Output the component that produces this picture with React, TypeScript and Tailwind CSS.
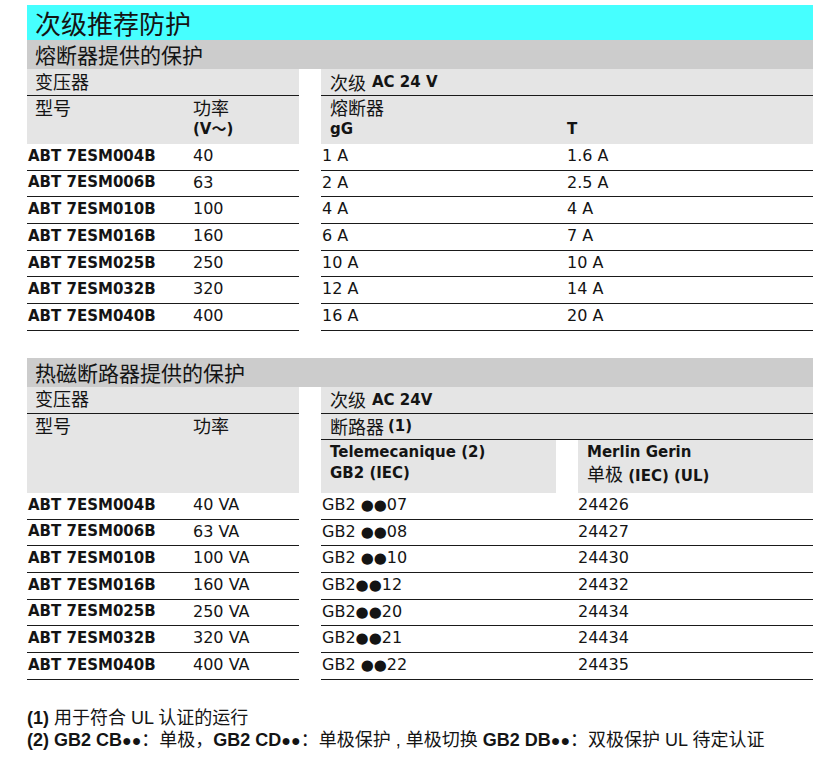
import React from "react";

const base = "font-['DejaVu_Sans','Noto_Sans_CJK_SC',sans-serif] text-[#141414]";
const cjk = "font-['Noto_Sans_CJK_SC',sans-serif]";

const fuseRows = [
    ["ABT 7ESM004B", "40", "1 A", "1.6 A"],
    ["ABT 7ESM006B", "63", "2 A", "2.5 A"],
    ["ABT 7ESM010B", "100", "4 A", "4 A"],
    ["ABT 7ESM016B", "160", "6 A", "7 A"],
    ["ABT 7ESM025B", "250", "10 A", "10 A"],
    ["ABT 7ESM032B", "320", "12 A", "14 A"],
    ["ABT 7ESM040B", "400", "16 A", "20 A"],
];

const breakerRows = [
    ["ABT 7ESM004B", "40 VA", "GB2 ", "07", "24426"],
    ["ABT 7ESM006B", "63 VA", "GB2 ", "08", "24427"],
    ["ABT 7ESM010B", "100 VA", "GB2 ", "10", "24430"],
    ["ABT 7ESM016B", "160 VA", "GB2", "12", "24432"],
    ["ABT 7ESM025B", "250 VA", "GB2", "20", "24434"],
    ["ABT 7ESM032B", "320 VA", "GB2", "21", "24434"],
    ["ABT 7ESM040B", "400 VA", "GB2 ", "22", "24435"],
];

function Row({ children, cols }: { children: React.ReactNode; cols: string }) {
    return (
        <div className={`grid ${cols} h-[26.7px] items-center pb-[2px] border-b border-[#1a1a1a]`}>
            {children}
        </div>
    );
}

export default function App() {
    return (
        <div className={`${base} bg-white w-[840px] h-[759px] pt-[5px]`}>
            <div className="ml-[27px] w-[786px]">
                {/* Title */}
                <div className={`h-[35px] bg-[#46ffff] pl-2 flex items-center text-[26px] ${cjk}`}>
                    次级推荐防护
                </div>
                <div className={`h-[29px] bg-[#cccccc] pl-2 flex items-center text-[21px] ${cjk}`}>
                    熔断器提供的保护
                </div>

                {/* Fuse table */}
                <div className="flex gap-[22px]">
                    <div className="w-[272px]">
                        <div className="bg-[#e5e5e5]">
                            <div className="h-[27px] flex items-center pl-2 text-[18px] border-b border-[#1a1a1a]">
                                变压器
                            </div>
                            <div className="h-[48px] grid grid-cols-[166px_1fr] pt-[3px] text-[18px] leading-[20px]">
                                <div className="pl-2">型号</div>
                                <div>
                                    <div>功率</div>
                                    <div className="font-bold text-[15px]">(V～)</div>
                                </div>
                            </div>
                        </div>
                        {fuseRows.map((r) => (
                            <Row key={r[0]} cols="grid-cols-[166px_1fr]">
                                <div className="pl-px font-bold text-[15px]">{r[0]}</div>
                                <div className="text-[16px]">{r[1]}</div>
                            </Row>
                        ))}
                    </div>
                    <div className="flex-1">
                        <div className="bg-[#e5e5e5]">
                            <div className="h-[27px] flex items-center pl-[9px] text-[18px] border-b border-[#1a1a1a]">
                                <span className={cjk}>次级</span>
                                <span className="font-bold text-[15px] ml-[6px]">AC 24 V</span>
                            </div>
                            <div className="h-[48px] grid grid-cols-[246px_1fr] pt-[3px] text-[18px] leading-[20px]">
                                <div className="pl-[9px]">
                                    <div>熔断器</div>
                                    <div className="font-bold text-[15px]">gG</div>
                                </div>
                                <div className="pt-[20px] font-bold text-[15px]">T</div>
                            </div>
                        </div>
                        {fuseRows.map((r) => (
                            <Row key={r[0]} cols="grid-cols-[246px_1fr]">
                                <div className="pl-px text-[16px]">{r[2]}</div>
                                <div className="text-[16px]">{r[3]}</div>
                            </Row>
                        ))}
                    </div>
                </div>

                {/* Breaker table */}
                <div className={`mt-[27px] h-[29px] bg-[#cccccc] pl-2 flex items-center text-[21px] ${cjk}`}>
                    热磁断路器提供的保护
                </div>
                <div className="flex gap-[22px]">
                    <div className="w-[272px]">
                        <div className="bg-[#e5e5e5]">
                            <div className="h-[27px] flex items-center pl-2 text-[18px] border-b border-[#1a1a1a]">
                                变压器
                            </div>
                            <div className="h-[79px] grid grid-cols-[166px_1fr] pt-[3px] text-[18px] leading-[20px]">
                                <div className="pl-2">型号</div>
                                <div>功率</div>
                            </div>
                        </div>
                        {breakerRows.map((r) => (
                            <Row key={r[0]} cols="grid-cols-[166px_1fr]">
                                <div className="pl-px font-bold text-[15px]">{r[0]}</div>
                                <div className="text-[16px]">{r[1]}</div>
                            </Row>
                        ))}
                    </div>
                    <div className="flex-1">
                        <div className="bg-[#e5e5e5] h-[27px] flex items-center pl-[9px] text-[18px] border-b border-[#1a1a1a]">
                            <span className={cjk}>次级</span>
                            <span className="font-bold text-[15px] ml-[6px]">AC 24V</span>
                        </div>
                        <div className="bg-[#e5e5e5] h-[26px] flex items-center pl-[9px] text-[18px] border-b border-[#1a1a1a]">
                            <span className={cjk}>断路器</span>
                            <span className="font-bold text-[15px] ml-[4px]">(1)</span>
                        </div>
                        <div className="flex gap-[22px] h-[53px] font-bold text-[15px] leading-[21px]">
                            <div className="w-[235px] bg-[#e5e5e5] pl-[9px] pt-[2px]">
                                <div>Telemecanique (2)</div>
                                <div>GB2 (IEC)</div>
                            </div>
                            <div className="flex-1 bg-[#e5e5e5] pl-[9px] pt-[2px]">
                                <div>Merlin Gerin</div>
                                <div>
                                    <span className={`${cjk} font-normal text-[18px]`}>单极</span> (IEC) (UL)
                                </div>
                            </div>
                        </div>
                        {breakerRows.map((r) => (
                            <Row key={r[0]} cols="grid-cols-[257px_1fr]">
                                <div className="pl-px text-[16px] whitespace-pre">
                                    {r[2]}
                                    <span className="text-[15px]">●●</span>
                                    {r[3]}
                                </div>
                                <div className="text-[16px]">{r[4]}</div>
                            </Row>
                        ))}
                    </div>
                </div>

                {/* Notes */}
                <div className="mt-[27px] font-['Liberation_Sans','Noto_Sans_CJK_SC',sans-serif] text-[18px] leading-[22px]">
                    <div>
                        <span className="font-bold">(1)</span> 用于符合 UL 认证的运行
                    </div>
                    <div>
                        <span className="font-bold">(2) GB2 CB</span>
                        <span className="text-[16px] font-bold">●●</span>：单极，
                        <span className="font-bold">GB2 CD</span>
                        <span className="text-[16px] font-bold">●●</span>：单极保护 , 单极切换{" "}
                        <span className="font-bold">GB2 DB</span>
                        <span className="text-[16px] font-bold">●●</span>：双极保护 UL 待定认证
                    </div>
                </div>
            </div>
        </div>
    );
}
